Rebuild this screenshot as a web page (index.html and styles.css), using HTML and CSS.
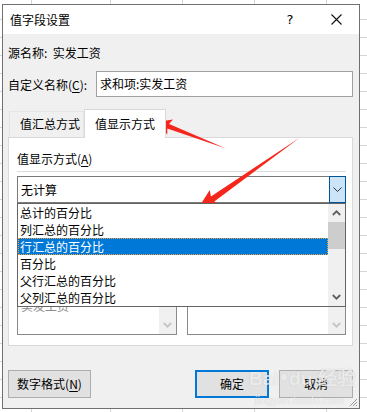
FILE: index.html
```html
<!DOCTYPE html>
<html lang="zh-CN">
<head>
<meta charset="utf-8">
<title>值字段设置</title>
<link rel="stylesheet" href="styles.css">
</head>
<body>

<!-- the dialog window over the sheet -->
<div class="dialog">
	<div class="titlebar">
		<span class="title">值字段设置</span>
		<span class="help">?</span>
		<span class="close">
			<svg width="11" height="11" viewBox="0 0 11 11"><path d="M0.5 0.5 L10.5 10.5 M10.5 0.5 L0.5 10.5" stroke="#111" stroke-width="1.1" fill="none"/></svg>
		</span>
	</div>

	<div class="content">
		<div class="source">源名称:&nbsp;&nbsp;实发工资</div>

		<div class="custom">
			<span class="custom-label">自定义名称(<u>C</u>):</span>
			<div class="textbox">求和项:实发工资</div>
		</div>

		<div class="tabs">
			<div class="tab">值汇总方式</div>
			<div class="tab active">值显示方式</div>
		</div>

		<div class="panel">
			<div class="group-label">值显示方式(<u>A</u>)</div>
			<div class="separator"></div>

			<div class="combo-wrap">
				<div class="combo">
					<span class="combo-text">无计算</span>
					<span class="combo-btn">
						<svg width="9" height="5" viewBox="0 0 9 5"><path d="M0.5 0.5 L4.5 4.5 L8.5 0.5" stroke="#333" stroke-width="1" fill="none"/></svg>
					</span>
				</div>

				<!-- open drop-down list -->
				<div class="droplist">
					<ul class="items">
						<li>总计的百分比</li>
						<li>列汇总的百分比</li>
						<li class="selected">行汇总的百分比</li>
						<li>百分比</li>
						<li>父行汇总的百分比</li>
						<li>父列汇总的百分比</li>
					</ul>
					<div class="vscroll">
						<svg class="arr-up" width="9" height="6" viewBox="0 0 9 6"><path d="M0.8 5 L4.5 1.3 L8.2 5" stroke="#606060" stroke-width="1.8" fill="none"/></svg>
						<div class="thumb"></div>
						<svg class="arr-down" width="9" height="6" viewBox="0 0 9 6"><path d="M0.8 1 L4.5 4.7 L8.2 1" stroke="#606060" stroke-width="1.8" fill="none"/></svg>
					</div>
				</div>
			</div>

			<div class="fields">
				<div class="field">
					<div class="field-label">基本字段(<u>F</u>):</div>
					<div class="listbox">
						<div class="listbox-items">
							<div>应发工资</div>
							<div>扣款合计</div>
							<div>实发工资</div>
						</div>
						<div class="listbox-scroll">
							<svg width="9" height="6" viewBox="0 0 9 6"><path d="M0.8 1 L4.5 4.7 L8.2 1" stroke="#c4c4c4" stroke-width="1.8" fill="none"/></svg>
						</div>
					</div>
				</div>
				<div class="field">
					<div class="field-label">基本项(<u>I</u>):</div>
					<div class="listbox">
						<div class="listbox-items"></div>
						<div class="listbox-scroll">
							<svg width="9" height="6" viewBox="0 0 9 6"><path d="M0.8 1 L4.5 4.7 L8.2 1" stroke="#c4c4c4" stroke-width="1.8" fill="none"/></svg>
						</div>
					</div>
				</div>
			</div>
		</div>

		<div class="buttons">
			<div class="btn btn-format">数字格式(<u>N</u>)</div>
			<div class="btn-group">
				<div class="btn btn-default">确定</div>
				<div class="btn">取消</div>
			</div>
		</div>
	</div>

	<svg class="grip" width="9" height="9" viewBox="0 0 9 9"><path d="M8 1 L1 8 M8 4 L4 8 M8 7 L7 8" stroke="#9a9a9a" stroke-width="1" fill="none"/></svg>

	<!-- faint watermark over the buttons -->
	<div class="watermark">
		<span class="wm-logo">Bai<span class="wm-paw">●</span>du 经验</span>
		<span class="wm-url">jingyan.baidu.com</span>
	</div>
</div>

<!-- red marker arrows drawn on the screenshot -->
<svg class="arrows" width="367" height="412" viewBox="0 0 367 412">
	<polygon points="157,122 172.9,119.4 169.1,123.9 226,148.5 167.3,128.5 167.3,134.4" fill="#f5261c"/>
	<polygon points="197,210 209.8,190 210.9,196.6 300,137.5 214.3,201.6 220.2,204.8" fill="#f5261c"/>
</svg>

</body>
</html>
```

FILE: styles.css
```css
/*
	sheet behind the dialog
*/

html, body {
	height: 100%;
}

body {
	margin: 0;
	overflow: hidden;
	font-family: "Noto Sans CJK SC", "Microsoft YaHei", sans-serif;
	font-size: 12px;
	color: #000;
	background-color: #fff;
	background-image:
		repeating-linear-gradient(to bottom, transparent 0 17px, #d4d4d4 17px 18px),
		repeating-linear-gradient(to right, transparent 0 71px, #d4d4d4 71px 72px);
	background-position: 0 2px, 39px 0;
}

u {
	text-decoration: underline;
	text-underline-offset: 2px;
}

/*
	dialog frame
*/

.dialog {
	position: relative;
	box-sizing: border-box;
	width: 358px;
	height: 405px;
	margin: 4px 0 0 2px;
	border: 1px solid #707070;
	background: #f0f0f0;
	display: flex;
	flex-direction: column;
}

.titlebar {
	height: 29px;
	background: #fff;
	display: flex;
	align-items: center;
	padding-left: 7px;
	flex-shrink: 0;
}

.title {
	flex: 1;
	font-size: 12px;
	line-height: 17px;
}

.help {
	font-family: "DejaVu Sans", sans-serif;
	font-size: 13px;
	width: 46px;
	text-align: center;
}

.close {
	width: 46px;
	display: flex;
	justify-content: center;
}

.content {
	flex: 1;
	padding: 10px 6px 0 5px;
	display: flex;
	flex-direction: column;
}

.source {
	line-height: 17px;
	height: 17px;
}

.custom {
	margin-top: 10px;
	display: flex;
	align-items: center;
}

.custom-label {
	width: 88px;
	line-height: 17px;
}

.textbox {
	box-sizing: border-box;
	flex: 1;
	height: 26px;
	border: 1px solid #a0a0a0;
	background: #fff;
	padding-left: 3px;
	line-height: 24px;
}

/*
	tab strip
*/

.tabs {
	margin-top: 12px;
	height: 28px;
	display: flex;
	align-items: flex-end;
	padding-left: 1px;
	position: relative;
	z-index: 1;
}

.tab {
	box-sizing: border-box;
	width: 75px;
	height: 26px;
	padding-left: 10px;
	line-height: 24px;
	border: 1px solid #e5e5e5;
	border-bottom: none;
	background: #f0f0f0;
}

.tab.active {
	width: 82px;
	height: 29px;
	padding-left: 0;
	text-align: center;
	line-height: 27px;
	background: #fff;
	border-color: #d9d9d9;
	margin-bottom: -1px;
}

.panel {
	box-sizing: border-box;
	height: 209px;
	border: 1px solid #d9d9d9;
	background: #fff;
	padding: 12px 6px 0 8px;
}

.group-label {
	line-height: 17px;
}

.separator {
	margin-top: 4px;
	height: 1px;
	background: #dcdcdc;
}

/*
	combo box and its open list
*/

.combo-wrap {
	position: relative;
	margin-top: 4px;
}

.combo {
	box-sizing: border-box;
	height: 27px;
	border: 1px solid #7a7a7a;
	display: flex;
	align-items: stretch;
	background: #fff;
}

.combo-text {
	flex: 1;
	padding-left: 3px;
	line-height: 25px;
}

.combo-btn {
	box-sizing: border-box;
	width: 17px;
	background: #cce4f7;
	border: 1px solid #005499;
	margin: -1px -1px -1px 0;
	display: flex;
	align-items: center;
	justify-content: center;
}

.droplist {
	position: absolute;
	left: 0;
	right: 0;
	top: 100%;
	box-sizing: border-box;
	height: 104px;
	border: 1px solid #646464;
	background: #fff;
	display: flex;
	z-index: 2;
}

.items {
	list-style: none;
	margin: 0;
	padding: 0;
	flex: 1;
}

.items li {
	box-sizing: border-box;
	height: 17px;
	line-height: 17px;
	padding-left: 2px;
	white-space: nowrap;
}

.items li.selected {
	background: #0078d7;
	color: #fff;
	outline: 1px dotted #f0a040;
	outline-offset: -1px;
}

.vscroll {
	width: 17px;
	background: #f0f0f0;
	display: flex;
	flex-direction: column;
	align-items: center;
}

.arr-up {
	margin-top: 6px;
}

.thumb {
	margin-top: 6px;
	width: 17px;
	height: 27px;
	background: #cdcdcd;
}

.arr-down {
	margin-top: auto;
	margin-bottom: 6px;
}

/*
	base field lists, mostly under the open list
*/

.fields {
	margin-top: 8px;
	display: grid;
	grid-template-columns: 1fr 1fr;
	column-gap: 10px;
}

.field-label {
	line-height: 17px;
	color: #888;
}

.listbox {
	box-sizing: border-box;
	margin-top: 5px;
	height: 102px;
	border: 1px solid #8a8a8a;
	display: flex;
	background: #fff;
}

.listbox-items {
	flex: 1;
	color: #8d8d8d;
	padding: 29px 0 0 3px;
	line-height: 17px;
}

.listbox-scroll {
	width: 17px;
	background: #f0f0f0;
	display: flex;
	flex-direction: column;
	justify-content: flex-end;
	align-items: center;
	padding-bottom: 6px;
	box-sizing: border-box;
}

/*
	bottom buttons
*/

.buttons {
	margin-top: 24px;
	display: flex;
	justify-content: space-between;
}

.btn-group {
	display: flex;
	gap: 10px;
}

.btn {
	box-sizing: border-box;
	width: 74px;
	height: 28px;
	border: 1px solid #adadad;
	background: #e1e1e1;
	text-align: center;
	line-height: 26px;
}

.btn-format {
	width: 83px;
}

.btn-default {
	border: 2px solid #0078d7;
	line-height: 24px;
}

.grip {
	position: absolute;
	right: 1px;
	bottom: 1px;
}

.watermark {
	position: absolute;
	left: 246px;
	top: 356px;
	width: 110px;
	display: flex;
	flex-direction: column;
	white-space: nowrap;
	color: rgba(255, 255, 255, 0.7);
	text-shadow: 0 0 1px rgba(140, 140, 140, 0.45);
	pointer-events: none;
}

.wm-logo {
	font-family: "Liberation Sans", sans-serif;
	font-weight: bold;
	font-size: 19px;
	line-height: 30px;
}

.wm-paw {
	font-size: 14px;
	margin: 0 1px;
	vertical-align: 4px;
}

.wm-url {
	font-family: "Liberation Sans", sans-serif;
	font-size: 11px;
	line-height: 13px;
	padding-left: 6px;
}

.arrows {
	position: absolute;
	left: 0;
	top: 0;
	pointer-events: none;
}
```
